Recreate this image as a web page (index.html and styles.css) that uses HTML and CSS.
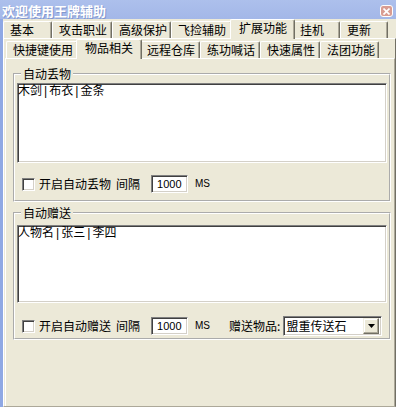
FILE: index.html
```html
<!DOCTYPE html>
<html lang="zh-CN">
<head>
<meta charset="utf-8">
<title>欢迎使用王牌辅助</title>
<link rel="stylesheet" href="styles.css">
</head>
<body>
<div class="window">
  <div class="titlebar">
    <span class="title">欢迎使用王牌辅助</span>
    <span class="close"><svg width="7" height="7" viewBox="0 0 7 7"><path d="M0.5 0.5L6.5 6.5M6.5 0.5L0.5 6.5" stroke="#fff" stroke-width="1.6"/></svg></span>
  </div>
  <div class="frame">
    <div class="tabrow tabrow-outer">
      <div class="tab w49">基本</div>
      <div class="tab w60">攻击职业</div>
      <div class="tab w59">高级保护</div>
      <div class="tab w61">飞捡辅助</div>
      <div class="tab w65 active">扩展功能</div>
      <div class="tab w47">挂机</div>
      <div class="tab w48">更新</div>
    </div>
    <div class="panel panel-outer">
      <div class="tabrow tabrow-inner">
        <div class="tab w72">快捷键使用</div>
        <div class="tab w66 active">物品相关</div>
        <div class="tab w60">远程仓库</div>
        <div class="tab w60">练功喊话</div>
        <div class="tab w60">快速属性</div>
        <div class="tab w59">法团功能</div>
      </div>
      <div class="panel panel-inner">
        <fieldset class="group group-drop">
          <legend>自动丢物</legend>
          <textarea class="list list-drop" readonly>木剑|布衣|金条</textarea>
          <div class="opt-row">
            <span class="check"></span>
            <span class="label">开启自动丢物</span>
            <span class="label label-gap">间隔</span>
            <span class="num">1000</span>
            <span class="unit">MS</span>
          </div>
        </fieldset>
        <fieldset class="group group-give">
          <legend>自动赠送</legend>
          <textarea class="list list-give" readonly>人物名|张三|李四</textarea>
          <div class="opt-row opt-row-give">
            <span class="check"></span>
            <span class="label">开启自动赠送</span>
            <span class="label label-gap">间隔</span>
            <span class="num">1000</span>
            <span class="unit">MS</span>
            <span class="label label-item">赠送物品:</span>
            <div class="select">
              <span class="select-text">盟重传送石</span>
              <span class="select-btn"><svg width="7" height="4" viewBox="0 0 7 4"><path d="M0 0H7L3.5 4Z" fill="#000"/></svg></span>
            </div>
          </div>
        </fieldset>
      </div>
    </div>
  </div>
</div>
</body>
</html>
```

FILE: styles.css
```css
* { box-sizing: border-box; }

body {
  margin: 0;
  width: 396px;
  height: 407px;
  overflow: hidden;
  background: #ece9d8;
  color: #000;
  font-family: "Noto Sans CJK SC", sans-serif;
  font-size: 12px;
  line-height: 14px;
}

.window {
  display: flex;
  flex-direction: column;
  height: 407px;
}

.titlebar {
  flex: none;
  height: 19px;
  display: flex;
  align-items: flex-end;
  justify-content: space-between;
  padding: 0 3px 1px 2px;
  background: linear-gradient(#adc0ec, #a3b7e8);
}

.title {
  color: #fff;
  font-weight: bold;
  font-size: 13px;
  line-height: 15px;
  text-shadow: 1px 1px 0 #8397cc;
}

.close {
  width: 13px;
  height: 12px;
  margin-bottom: 1px;
  display: flex;
  align-items: center;
  justify-content: center;
  background: #d99c92;
  border: 1px solid #fff;
  border-radius: 3px;
}

.frame {
  flex: 1;
  display: flex;
  flex-direction: column;
  border-left: 3px solid #8fa8e4;
}

.tabrow {
  flex: none;
  height: 19px;
  display: flex;
  align-items: flex-end;
  position: relative;
  z-index: 1;
}

.tabrow-inner { padding-left: 1px; }

.tab {
  height: 17px;
  padding: 1px 0 0 6px;
  white-space: nowrap;
  background: #ece9d8;
  border-top: 1px solid #fff;
  border-left: 1px solid #fff;
  border-right: 1px solid #716f64;
  box-shadow: inset -1px 0 0 #aca899;
  border-radius: 2px 2px 0 0;
}

.tab.active {
  height: 20px;
  margin: 0 -2px -1px;
  padding-left: 8px;
  position: relative;
  z-index: 2;
}

.w47 { width: 47px; }
.w48 { width: 48px; }
.w49 { width: 49px; }
.w59 { width: 59px; }
.w60 { width: 60px; }
.w61 { width: 61px; }
.w65 { width: 65px; }
.w66 { width: 66px; }
.w72 { width: 72px; }

.panel {
  border-top: 1px solid #fff;
  border-left: 1px solid #fff;
}

.panel-outer {
  flex: 1;
  display: flex;
  flex-direction: column;
  padding-left: 1px;
  border-right: 1px solid #716f64;
  border-bottom: 1px solid #aca899;
}

.panel-inner {
  flex: 1;
  padding: 8px 3px 0 7px;
  border-right: 1px solid #aca899;
}

.group {
  margin: 0;
  padding: 2px 2px 7px;
  border: 2px groove #fff;
  min-width: 0;
}

.group legend {
  margin-left: 4px;
  padding: 0 2px;
  line-height: 14px;
}

.group-give {
  margin-top: 4px;
  padding-top: 5px;
  padding-bottom: 2px;
}

.list {
  display: block;
  width: 100%;
  height: 80px;
  margin: 0;
  padding: 1px 0 0 0;
  resize: none;
  overflow: hidden;
  background: #fff;
  color: #000;
  font-family: "Liberation Mono", "Noto Sans CJK SC", monospace;
  font-size: 12px;
  line-height: 14px;
  border: 1px solid;
  border-color: #808080 #fff #fff #808080;
  box-shadow: inset 1px 1px 0 #404040, inset -1px -1px 0 #d4d0c8;
  outline: none;
}

.list-give { height: 78px; }

.opt-row {
  display: flex;
  align-items: center;
  height: 18px;
  margin-top: 12px;
}

.opt-row-give {
  height: 20px;
  margin-top: 13px;
}

.check {
  width: 13px;
  height: 13px;
  margin: 0 4px 0 5px;
  background: #fff;
  border: 1px solid;
  border-color: #808080 #fff #fff #808080;
  box-shadow: inset 1px 1px 0 #404040, inset -1px -1px 0 #d4d0c8;
}

.label { white-space: nowrap; }

.label-gap { margin-left: 5px; }

.num {
  width: 37px;
  height: 18px;
  margin-left: 11px;
  padding: 2px 0 0 5px;
  background: #fff;
  font-family: "Liberation Sans", sans-serif;
  font-size: 11px;
  line-height: 12px;
  border: 1px solid;
  border-color: #808080 #fff #fff #808080;
  box-shadow: inset 1px 1px 0 #404040, inset -1px -1px 0 #d4d0c8;
}

.unit {
  margin-left: 7px;
  font-family: "Liberation Sans", sans-serif;
  font-size: 10px;
}

.label-item { margin-left: 19px; }

.select {
  width: 99px;
  height: 20px;
  margin-left: 3px;
  display: flex;
  align-items: center;
  justify-content: space-between;
  padding: 2px;
  background: #fff;
  border: 1px solid;
  border-color: #808080 #fff #fff #808080;
  box-shadow: inset 1px 1px 0 #404040, inset -1px -1px 0 #d4d0c8;
}

.select-text { padding-left: 0; }

.select-btn {
  width: 16px;
  height: 16px;
  display: flex;
  align-items: center;
  justify-content: center;
  background: #ece9d8;
  border: 1px solid;
  border-color: #f1efe2 #716f64 #716f64 #f1efe2;
  box-shadow: inset -1px -1px 0 #aca899, inset 1px 1px 0 #fff;
}
```
